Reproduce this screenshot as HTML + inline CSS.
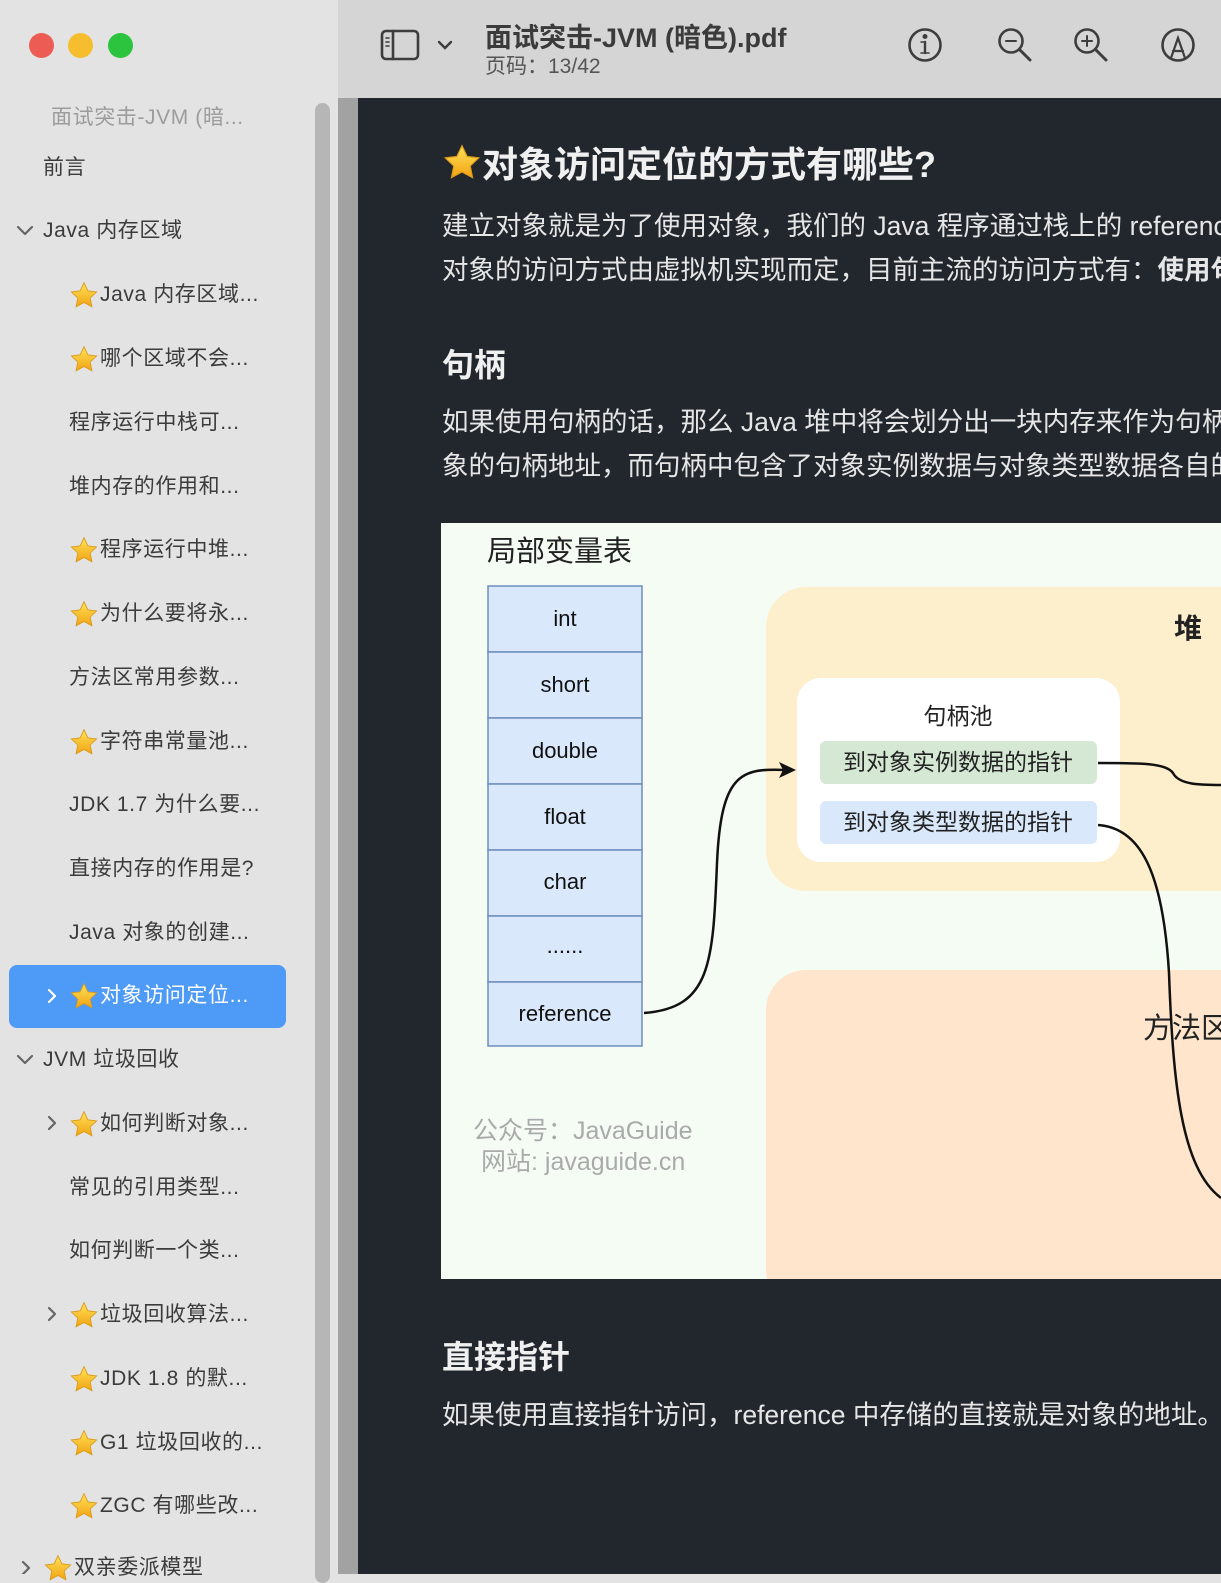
<!DOCTYPE html>
<html><head><meta charset="utf-8">
<style>
*{margin:0;padding:0;box-sizing:border-box}
body{width:1221px;height:1574px;overflow:hidden;position:relative;background:#e3e3e3;font-family:"Liberation Sans","Noto Sans CJK SC",sans-serif}
.sb{position:absolute;left:0;top:0;width:338px;height:1574px;background:#e3e3e3}
.it{position:absolute;font-size:21px;color:#3b3b3b;white-space:nowrap;line-height:28px;height:28px;letter-spacing:0.6px}
.st{display:inline-block;width:30px;height:28px;vertical-align:top;margin-right:1px}
.tb{position:absolute;left:338px;top:0;width:883px;height:98px;background:#d5d5d5}
.strip{position:absolute;left:338px;top:98px;width:20px;height:1476px;background:#a2a2a2}
.main{position:absolute;left:358px;top:98px;width:863px;height:1476px;background:#22272e;overflow:hidden}
.tx{position:absolute;white-space:nowrap;color:#e6e6e6}
.p{font-size:26.5px;left:84px}
.h{font-weight:bold;font-size:32px;left:84px;color:#f0f0f0}
</style></head><body>
<div class="sb">
  <div style="position:absolute;left:29px;top:33px;width:25px;height:25px;border-radius:50%;background:#ed5b55"></div>
  <div style="position:absolute;left:68px;top:33px;width:25px;height:25px;border-radius:50%;background:#f6be2f"></div>
  <div style="position:absolute;left:108px;top:33px;width:25px;height:25px;border-radius:50%;background:#2cc43f"></div>
  <div style="position:absolute;left:315px;top:103px;width:15px;height:1480px;border-radius:8px;background:#b6b6b6"></div>
  <div style="position:absolute;left:9px;top:965px;width:277px;height:63px;border-radius:8px;background:#4d9af7"></div>
</div>
<svg width="0" height="0" style="position:absolute"><defs>
<linearGradient id="g" x1="0" y1="0" x2="0" y2="1"><stop offset="0" stop-color="#ffe25a"/><stop offset="1" stop-color="#f2a312"/></linearGradient>
<symbol id="star" viewBox="0 0 28 26"><path d="M14 1.5l3.6 7.6 8.2 1-6 5.7 1.6 8.2L14 20l-7.4 4 1.6-8.2-6-5.7 8.2-1z" fill="url(#g)" stroke="#d99a1a" stroke-width=".8"/></symbol>
</defs></svg>
<svg width="338" height="1574" style="position:absolute;left:0;top:0" fill="none" stroke="#666" stroke-width="2.2" stroke-linecap="round" stroke-linejoin="round">
 <path d="M18 227l7 7 7-7"/><path d="M18 1056l7 7 7-7"/>
 <path d="M49 990l6 6-6 6" stroke="#fff"/>
 <path d="M49 1117l6 6-6 6"/><path d="M49 1308l6 6-6 6"/><path d="M23 1562l6 6-6 6"/>
</svg>
<div class="it" style="left:51px;top:104px;color:#9c9c9c">面试突击-JVM (暗...</div>
<div class="it" style="left:43px;top:154px">前言</div>
<div class="it" style="left:43px;top:217px">Java 内存区域</div>
<div class="it" style="left:69px;top:281px"><svg class="st"><use href="#star"/></svg>Java 内存区域...</div>
<div class="it" style="left:69px;top:345px"><svg class="st"><use href="#star"/></svg>哪个区域不会...</div>
<div class="it" style="left:69px;top:409px">程序运行中栈可...</div>
<div class="it" style="left:69px;top:473px">堆内存的作用和...</div>
<div class="it" style="left:69px;top:536px"><svg class="st"><use href="#star"/></svg>程序运行中堆...</div>
<div class="it" style="left:69px;top:600px"><svg class="st"><use href="#star"/></svg>为什么要将永...</div>
<div class="it" style="left:69px;top:664px">方法区常用参数...</div>
<div class="it" style="left:69px;top:728px"><svg class="st"><use href="#star"/></svg>字符串常量池...</div>
<div class="it" style="left:69px;top:791px">JDK 1.7 为什么要...</div>
<div class="it" style="left:69px;top:855px">直接内存的作用是?</div>
<div class="it" style="left:69px;top:919px">Java 对象的创建...</div>
<div class="it" style="left:69px;top:982px;color:#fff"><svg class="st"><use href="#star"/></svg>对象访问定位...</div>
<div class="it" style="left:43px;top:1046px">JVM 垃圾回收</div>
<div class="it" style="left:69px;top:1110px"><svg class="st"><use href="#star"/></svg>如何判断对象...</div>
<div class="it" style="left:69px;top:1174px">常见的引用类型...</div>
<div class="it" style="left:69px;top:1237px">如何判断一个类...</div>
<div class="it" style="left:69px;top:1301px"><svg class="st"><use href="#star"/></svg>垃圾回收算法...</div>
<div class="it" style="left:69px;top:1365px"><svg class="st"><use href="#star"/></svg>JDK 1.8 的默...</div>
<div class="it" style="left:69px;top:1429px"><svg class="st"><use href="#star"/></svg>G1 垃圾回收的...</div>
<div class="it" style="left:69px;top:1492px"><svg class="st"><use href="#star"/></svg>ZGC 有哪些改...</div>
<div class="it" style="left:43px;top:1554px"><svg class="st"><use href="#star"/></svg>双亲委派模型</div>

<div class="tb">
 <svg width="883" height="98" style="position:absolute;left:0;top:0" fill="none" stroke="#3d3d3d" stroke-width="2.6" stroke-linecap="round">
  <rect x="44" y="31" width="36" height="28" rx="4"/><line x1="55" y1="31" x2="55" y2="59"/>
  <line x1="48" y1="38" x2="51" y2="38" stroke-width="1.6"/><line x1="48" y1="42" x2="51" y2="42" stroke-width="1.6"/><line x1="48" y1="46" x2="51" y2="46" stroke-width="1.6"/>
  <path d="M101 42l6 6 6-6" stroke-width="2.4"/>
  <circle cx="587" cy="45" r="15.5"/><line x1="587" y1="42" x2="587" y2="53" stroke-width="2.4"/><circle cx="587" cy="36.5" r="1.2" fill="#3d3d3d"/><path d="M583 42h4M583 53h8" stroke-width="1.6"/>
  <circle cx="673" cy="41" r="11.5"/><line x1="682" y1="50" x2="692" y2="60" stroke-width="3"/><line x1="668" y1="41" x2="678" y2="41" stroke-width="2"/>
  <circle cx="749" cy="41" r="11.5"/><line x1="758" y1="50" x2="768" y2="60" stroke-width="3"/><line x1="744" y1="41" x2="754" y2="41" stroke-width="2"/><line x1="749" y1="36" x2="749" y2="46" stroke-width="2"/>
  <circle cx="840" cy="45" r="15.5"/><path d="M833 58l7-20 7 20M835 51h10" stroke-width="2.2"/>
 </svg>
 <div style="position:absolute;left:147px;top:16px;font-size:27px;font-weight:bold;color:#3b3b3b;white-space:nowrap">面试突击-JVM (暗色).pdf</div>
 <div style="position:absolute;left:147px;top:50px;font-size:21px;color:#555;white-space:nowrap">页码：13/42</div>
</div>
<div class="strip"></div>
<div class="main">
 <div class="tx h" style="top:38px;font-size:36px"><svg style="width:40px;height:38px;vertical-align:-4px"><use href="#star"/></svg>对象访问定位的方式有哪些?</div>
 <div class="tx p" style="top:106px">建立对象就是为了使用对象，我们的 Java 程序通过栈上的 reference 数据来操作堆上的具体对象。</div>
 <div class="tx p" style="top:150px">对象的访问方式由虚拟机实现而定，目前主流的访问方式有：<b>使用句柄、直接指针</b></div>
 <div class="tx h" style="top:242px">句柄</div>
 <div class="tx p" style="top:302px">如果使用句柄的话，那么 Java 堆中将会划分出一块内存来作为句柄池，reference 中存储的就是对</div>
 <div class="tx p" style="top:346px">象的句柄地址，而句柄中包含了对象实例数据与对象类型数据各自的具体地址信息。</div>
 <div class="tx h" style="top:1234px">直接指针</div>
 <div class="tx p" style="top:1295px">如果使用直接指针访问，reference 中存储的直接就是对象的地址。</div>
 <svg width="780" height="756" style="position:absolute;left:83px;top:425px" font-family="Liberation Sans,Noto Sans CJK SC,sans-serif">
  <rect width="780" height="756" fill="#f4fcf4"/>
  <text x="46" y="38" font-size="29" fill="#222">局部变量表</text>
  <g fill="#dae8fc" stroke="#6c8ebf" stroke-width="1.5">
   <rect x="47" y="63" width="154" height="66"/><rect x="47" y="129" width="154" height="66"/><rect x="47" y="195" width="154" height="66"/><rect x="47" y="261" width="154" height="66"/><rect x="47" y="327" width="154" height="66"/><rect x="47" y="393" width="154" height="66"/><rect x="47" y="459" width="154" height="64"/>
  </g>
  <g font-size="22" fill="#111" text-anchor="middle">
   <text x="124" y="103">int</text><text x="124" y="169">short</text><text x="124" y="235">double</text><text x="124" y="301">float</text><text x="124" y="366">char</text><text x="124" y="430">......</text><text x="124" y="498">reference</text>
  </g>
  <rect x="325" y="64" width="520" height="304" rx="40" fill="#fdefcc"/>
  <rect x="325" y="447" width="520" height="340" rx="40" fill="#fee5cb"/>
  <text x="733" y="115" font-size="28" font-weight="bold" fill="#222">堆</text>
  <text x="702" y="515" font-size="29" fill="#222">方法区</text>
  <rect x="356" y="155" width="323" height="184" rx="24" fill="#fff"/>
  <text x="517" y="201" font-size="23" fill="#222" text-anchor="middle">句柄池</text>
  <rect x="379" y="218" width="277" height="43" rx="6" fill="#d5e8d4"/>
  <rect x="379" y="278" width="277" height="43" rx="6" fill="#dae8fc"/>
  <text x="517" y="247" font-size="23" fill="#222" text-anchor="middle">到对象实例数据的指针</text>
  <text x="517" y="307" font-size="23" fill="#222" text-anchor="middle">到对象类型数据的指针</text>
  <g fill="none" stroke="#111" stroke-width="2.5">
   <path d="M203 490C270 485 272 440 276 340C280 250 300 245 345 247"/>
   <path d="M657 240C700 240 725 240 732 250C738 262 760 262 780 262"/>
   <path d="M657 302C700 305 722 350 728 450C732 560 740 645 780 675"/>
  </g>
  <path d="M355 247l-17-8 4 8-4 8z" fill="#111"/>
  <text x="32" y="616" font-size="25" fill="#aaa">公众号：JavaGuide</text>
  <text x="40" y="647" font-size="25" fill="#aaa">网站: javaguide.cn</text>
 </svg>
</div>
</body></html>
